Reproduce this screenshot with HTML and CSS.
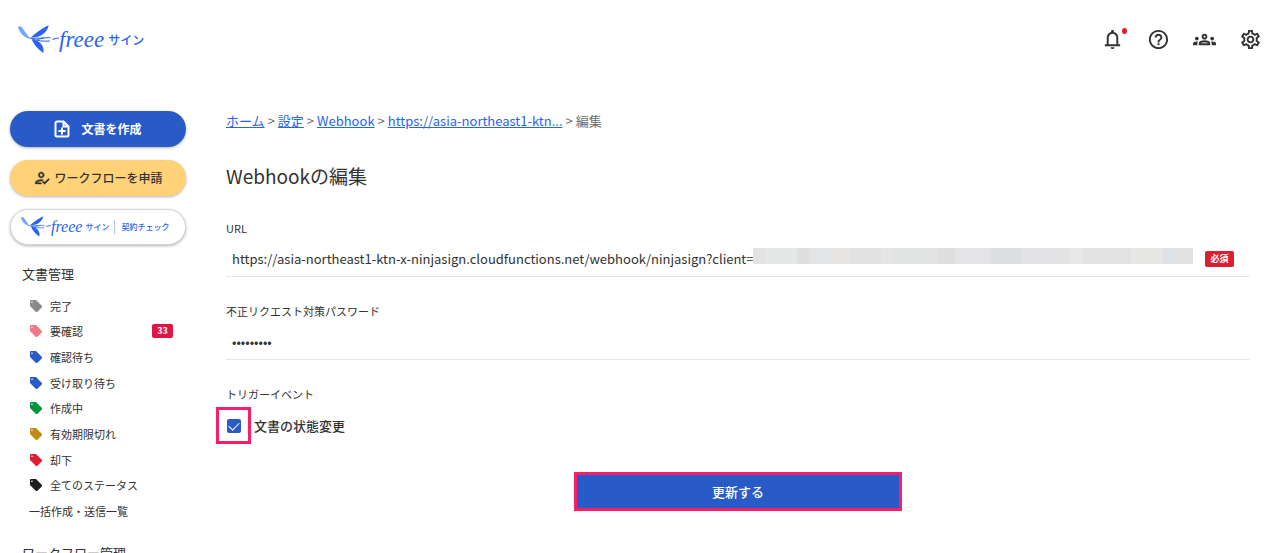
FILE: index.html
```html
<!DOCTYPE html>
<html lang="ja">
<head>
    <meta charset="UTF-8">
    <meta name="viewport" content="width=device-width, initial-scale=1.0">
    <title>Webhookの編集</title>
    <link rel="stylesheet" href="styles.css">
</head>
<body>
    <svg class="symbols" aria-hidden="true">
        <symbol id="swallow" viewBox="0 0 42 30">
            <path fill="#73a5ff" d="M1 2c1-1 3-1 4 .5l6.500 9-1.500 1.500-2.500-1.500C4 9 2 6 1 2z"/>
            <path fill="#2864f0" d="M13.500 12.700C19 8 24 3.500 31.700.3c-1 5-5 10-11.700 11.700zM14.500 14c2 5 6 10 11.800 14 1-5-1-9.500-6.600-12.500z"/>
            <path fill="none" stroke="#2864f0" stroke-width="1" d="M10.500 12.500l4 .9 19-.7M14.500 13.500c6 2.500 12 3 18.500 2.500M20 14.500l7-1.500"/>
            <path fill="none" stroke="#2864f0" stroke-width="1.200" d="M35.500 14.500c3-1.500 5-1.500 7.500-1.500"/>
        </symbol>
        <symbol id="tag" viewBox="0 0 12 12">
            <path fill="currentColor" fill-rule="evenodd" d="M0 1a1 1 0 0 1 1-1h5l6 6a1 1 0 0 1 0 1.200L7.200 12a1 1 0 0 1-1.200 0L0 6zM2 1.400a.8.8 0 1 0 0 1.600.8.8 0 0 0 0-1.600z"/>
        </symbol>
    </svg>

    <header class="header">
        <a class="logo" href="#">
            <svg class="logo-bird"><use href="#swallow"/></svg>
            <span class="logo-name">freee</span>
            <span class="logo-sub">サイン</span>
        </a>
        <nav class="header-nav">
            <button class="icon-button" type="button" aria-label="お知らせ">
                <svg viewBox="0 0 24 24"><path d="M4 19v-2h2v-7q0-2.075 1.250-3.688T10.500 4.200v-.7q0-.625.438-1.063T12 2t1.063.438T13.500 3.500v.7q2 .5 3.250 2.113T18 10v7h2v2zm8 3q-.825 0-1.413-.587T10 20h4q0 .825-.588 1.413T12 22m-4-5h8v-7q0-1.650-1.175-2.825T12 6 9.175 7.175 8 10z"/></svg>
                <span class="dot"></span>
            </button>
            <button class="icon-button" type="button" aria-label="ヘルプ">
                <svg viewBox="0 0 24 24"><path d="M11 18h2v-2h-2v2zm1-16C6.480 2 2 6.480 2 12s4.480 10 10 10 10-4.480 10-10S17.520 2 12 2zm0 18c-4.410 0-8-3.590-8-8s3.590-8 8-8 8 3.590 8 8-3.590 8-8 8zm0-14c-2.210 0-4 1.790-4 4h2c0-1.100.9-2 2-2s2 .9 2 2c0 2-3 1.750-3 5h2c0-2.250 3-2.500 3-5 0-2.210-1.790-4-4-4z"/></svg>
            </button>
            <button class="icon-button" type="button" aria-label="メンバー">
                <svg viewBox="0 0 24 24"><path d="M4 13c1.100 0 2-.9 2-2s-.9-2-2-2-2 .9-2 2 .9 2 2 2zm1.130 1.100c-.37-.06-.74-.1-1.130-.1-.99 0-1.930.21-2.780.58C.48 14.900 0 15.620 0 16.430V18h4.500v-1.610c0-.83.23-1.610.63-2.290zM20 13c1.100 0 2-.9 2-2s-.9-2-2-2-2 .9-2 2 .9 2 2 2zm4 3.430c0-.81-.48-1.530-1.220-1.850-.85-.37-1.790-.58-2.780-.58-.39 0-.76.04-1.130.1.4.68.63 1.460.63 2.290V18H24v-1.570zm-7.760-2.780c-1.170-.52-2.610-.9-4.240-.9s-3.070.39-4.240.9C6.680 14.130 6 15.210 6 16.390V18h12v-1.610c0-1.180-.68-2.260-1.760-2.740zM8.070 16c.09-.23.13-.39.91-.69.97-.38 1.990-.56 3.020-.56s2.050.18 3.020.56c.77.3.81.46.91.69H8.070zM12 8c.55 0 1 .45 1 1s-.45 1-1 1-1-.45-1-1 .45-1 1-1m0-2c-1.660 0-3 1.340-3 3s1.340 3 3 3 3-1.340 3-3-1.340-3-3-3z"/></svg>
            </button>
            <button class="icon-button" type="button" aria-label="設定">
                <svg viewBox="0 0 24 24"><path d="M19.430 12.980c.04-.32.07-.64.07-.98 0-.34-.03-.66-.07-.98l2.110-1.650c.19-.15.24-.42.12-.64l-2-3.460c-.09-.16-.26-.25-.44-.25-.06 0-.12.01-.17.03l-2.490 1c-.52-.4-1.080-.73-1.690-.98l-.38-2.650C14.460 2.180 14.250 2 14 2h-4c-.25 0-.46.18-.49.42l-.38 2.650c-.61.25-1.170.59-1.690.98l-2.490-1c-.06-.02-.12-.03-.18-.03-.17 0-.34.09-.43.25l-2 3.460c-.13.22-.07.49.12.64l2.110 1.650c-.04.32-.07.65-.07.98 0 .33.03.66.07.98l-2.110 1.650c-.19.15-.24.42-.12.64l2 3.460c.09.16.26.25.44.25.06 0 .12-.01.17-.03l2.490-1c.52.4 1.080.73 1.690.98l.38 2.650c.03.24.24.42.49.42h4c.25 0 .46-.18.49-.42l.38-2.650c.61-.25 1.170-.59 1.690-.98l2.490 1c.06.02.12.03.18.03.17 0 .34-.09.43-.25l2-3.460c.12-.22.07-.49-.12-.64l-2.110-1.650zm-1.980-1.710c.04.31.05.52.05.73 0 .21-.02.43-.05.73l-.14 1.130.89.7 1.080.84-.7 1.210-1.270-.51-1.040-.42-.9.68c-.43.32-.84.56-1.250.73l-1.060.43-.16 1.130-.2 1.350h-1.400l-.19-1.350-.16-1.130-1.060-.43c-.43-.18-.83-.41-1.230-.71l-.91-.7-1.060.43-1.270.51-.7-1.210 1.080-.84.89-.7-.14-1.130c-.03-.31-.05-.54-.05-.74s.02-.43.05-.73l.14-1.130-.89-.7-1.080-.84.7-1.210 1.270.51 1.040.42.9-.68c.43-.32.84-.56 1.250-.73l1.060-.43.16-1.130.2-1.350h1.390l.19 1.350.16 1.130 1.060.43c.43.18.83.41 1.230.71l.91.7 1.060-.43 1.270-.51.7 1.210-1.070.85-.89.7.14 1.130zM12 8c-2.210 0-4 1.790-4 4s1.790 4 4 4 4-1.790 4-4-1.790-4-4-4zm0 6c-1.100 0-2-.9-2-2s.9-2 2-2 2 .9 2 2-.9 2-2 2z"/></svg>
            </button>
        </nav>
    </header>

    <div class="container">
        <aside class="sidebar">
            <button class="side-button create" type="button">
                <svg width="16" height="18" viewBox="0 0 16 18" fill="none" stroke="currentColor" stroke-width="2"><path d="M9.500 1.500H3a1.500 1.500 0 0 0-1.500 1.500v12A1.500 1.500 0 0 0 3 16.500h10a1.500 1.500 0 0 0 1.500-1.500V6.500zM9.500 1.500v5h5M8 7.500v7M4.500 11h7"/></svg>
                文書を作成
            </button>
            <button class="side-button apply" type="button">
                <svg width="18" height="18" viewBox="0 0 24 24" fill="currentColor" stroke="currentColor" stroke-width=".5"><path d="M11 12c2.210 0 4-1.790 4-4s-1.790-4-4-4-4 1.790-4 4 1.790 4 4 4zm0-6c1.100 0 2 .9 2 2s-.9 2-2 2-2-.9-2-2 .9-2 2-2zm-1 12H5c0-.64 3.130-2 6-2 .33 0 .65.02.97.05l1.730-1.780c-.98-.18-1.930-.27-2.700-.27-2.670 0-8 1.340-8 4v2h9l-2-2zm10.600-5.500l-5.130 5.170-2.070-2.080L12 17l3.470 3.500L22 13.910z"/></svg>
                ワークフローを申請
            </button>
            <button class="side-button check" type="button">
                <svg class="check-bird"><use href="#swallow"/></svg>
                <span class="check-name">freee</span>
                <span class="check-sub">サイン</span>
                <span class="check-label">契約チェック</span>
            </button>

            <h2 class="side-title">文書管理</h2>
            <ul class="side-list">
                <li><a href="#"><svg class="tag gray"><use href="#tag"/></svg>完了</a></li>
                <li><a href="#"><svg class="tag pink"><use href="#tag"/></svg>要確認<span class="count">33</span></a></li>
                <li><a href="#"><svg class="tag blue"><use href="#tag"/></svg>確認待ち</a></li>
                <li><a href="#"><svg class="tag blue"><use href="#tag"/></svg>受け取り待ち</a></li>
                <li><a href="#"><svg class="tag green"><use href="#tag"/></svg>作成中</a></li>
                <li><a href="#"><svg class="tag gold"><use href="#tag"/></svg>有効期限切れ</a></li>
                <li><a href="#"><svg class="tag red"><use href="#tag"/></svg>却下</a></li>
                <li><a href="#"><svg class="tag black"><use href="#tag"/></svg>全てのステータス</a></li>
                <li><a href="#">一括作成・送信一覧</a></li>
            </ul>
            <h2 class="side-title">ワークフロー管理</h2>
        </aside>

        <main class="main">
            <nav class="breadcrumb">
                <a href="#">ホーム</a>
                <span>&gt;</span>
                <a href="#">設定</a>
                <span>&gt;</span>
                <a href="#">Webhook</a>
                <span>&gt;</span>
                <a href="#">https://asia-northeast1-ktn...</a>
                <span>&gt;</span>
                <span>編集</span>
            </nav>
            <h1 class="page-title">Webhookの編集</h1>

            <form>
                <div class="field">
                    <label for="url">URL</label>
                    <div class="field-row">
                        <input class="url-input" type="text" id="url" name="url" value="https://asia-northeast1-ktn-x-ninjasign.cloudfunctions.net/webhook/ninjasign?client=">
                        <span class="mask"></span>
                        <span class="required">必須</span>
                    </div>
                </div>
                <div class="field">
                    <label for="password">不正リクエスト対策パスワード</label>
                    <div class="field-row">
                        <input type="password" id="password" name="password" value="webhook12">
                    </div>
                </div>
                <fieldset class="events">
                    <legend>トリガーイベント</legend>
                    <div class="check-row">
                        <span class="highlight"><input type="checkbox" id="status" name="status" checked></span>
                        <label for="status">文書の状態変更</label>
                    </div>
                </fieldset>
                <button class="submit" type="submit">更新する</button>
            </form>
        </main>
    </div>
</body>
</html>
```
FILE: styles.css
```css
* {
    box-sizing: border-box;
}

body {
    margin: 0;
    height: 100vh;
    overflow: hidden;
    font-family: "Noto Sans CJK JP", sans-serif;
    font-size: 13px;
    line-height: 20px;
    color: #323232;
    background-color: #fff;
}

button,
input {
    font: inherit;
    color: inherit;
}

button {
    cursor: pointer;
}

.symbols {
    display: none;
}

.header {
    display: flex;
    justify-content: space-between;
    align-items: center;
    height: 79px;
    padding: 0 15px 0 17px;
}

.logo {
    display: flex;
    align-items: center;
    color: #2864f0;
    text-decoration: none;
}

.logo-bird {
    width: 42px;
    height: 30px;
}

.logo-name,
.check-name {
    font-family: "Liberation Serif", serif;
    font-style: italic;
}

.logo-name {
    font-size: 23px;
}

.logo-sub {
    margin-left: 4px;
    font-size: 12px;
    font-weight: 500;
}

.header-nav {
    display: flex;
    gap: 23px;
}

.icon-button {
    position: relative;
    display: flex;
    padding: 0;
    border: none;
    background: none;
}

.icon-button svg {
    width: 23px;
    height: 23px;
    fill: #323232;
}

.dot {
    position: absolute;
    top: 0;
    right: -3px;
    width: 5px;
    height: 6px;
    border-radius: 50%;
    background-color: #dc1e32;
}

.container {
    display: flex;
    gap: 40px;
    padding: 32px 27px 0 10px;
}

.sidebar {
    flex: none;
    width: 176px;
}

.side-button {
    display: flex;
    align-items: center;
    justify-content: center;
    width: 100%;
    height: 36px;
    margin-bottom: 13px;
    padding: 0;
    border: none;
    border-radius: 18px;
    font-size: 12px;
    font-weight: 500;
    box-shadow: 0 1px 3px rgba(0, 0, 0, 0.3);
}

.create {
    gap: 11px;
    color: #fff;
    font-weight: 700;
    background-color: #285ac8;
}

.apply {
    gap: 3px;
    background-color: #ffd278;
}

.check {
    justify-content: flex-start;
    padding-left: 9px;
    border: 1px solid #d7d7d7;
    color: #2864f0;
    font-size: 8px;
    background-color: #fff;
}

.check-bird {
    width: 31px;
    height: 22px;
}

.check-name {
    font-size: 16px;
    font-weight: 400;
}

.check-sub {
    margin: 0 5px 0 3px;
}

.check-label {
    padding-left: 6px;
    border-left: 1px solid #aac8ff;
    line-height: 14px;
}

.side-title {
    margin: 19px 0 9px 12px;
    font-size: 13px;
    font-weight: 400;
}

.side-list {
    display: grid;
    grid-auto-rows: 1fr;
    height: 231px;
    margin: 0 0 17px;
    padding: 0 13px 0 19px;
    list-style: none;
    font-size: 11px;
}

.side-list a {
    display: flex;
    align-items: center;
    height: 100%;
    color: inherit;
    text-decoration: none;
}

.tag {
    width: 12px;
    height: 12px;
    margin: 0 8px 0 1px;
}

.gray {
    color: #8c8989;
}

.pink {
    color: #f07882;
}

.blue {
    color: #285ac8;
}

.green {
    color: #00963c;
}

.gold {
    color: #be8c14;
}

.red {
    color: #dc1e32;
}

.black {
    color: #1e1e1e;
}

.count,
.required {
    border-radius: 2px;
    color: #fff;
    font-size: 9px;
    font-weight: 700;
    text-align: center;
}

.count {
    width: 21px;
    margin-left: auto;
    line-height: 14px;
    background-color: #e11446;
}

.main {
    flex: 1;
    min-width: 0;
}

.breadcrumb {
    display: flex;
    gap: 3px;
    color: #6e6b6b;
}

.breadcrumb a {
    color: #2864f0;
}

.page-title {
    margin: 30px 0 27px;
    font-size: 19px;
    font-weight: 400;
    line-height: 30px;
}

.field {
    margin-bottom: 24px;
    border-bottom: 1px solid #e6e6e6;
}

.field label,
.events legend {
    display: block;
    padding: 0;
    font-size: 11px;
}

.field-row {
    display: flex;
    align-items: center;
    height: 38px;
    padding: 3px 16px 0 6px;
}

.field-row input {
    padding: 0;
    border: none;
    outline: none;
    background: none;
}

.url-input {
    flex: none;
    width: 521px;
}

.mask {
    flex: 1;
    height: 16px;
    margin: -6px 12px 0 0;
    background: linear-gradient(90deg, #e4e3e4 3%, #e6e8e7 3% 10%, #dfdfe0 10% 13%, #e3e4e7 13% 18%, #e6e5e3 18% 22%, #e2e2e2 22% 29%, #e6e5e3 29% 32%, #e2e4e3 32% 42%, #dfdfe0 42% 46%, #e4e3e5 46% 54%, #dedfe1 54% 61%, #e3e3e6 61% 72%, #e8e8e6 72% 75%, #e3e3e3 75% 86%, #e7e7e6 86% 93%, #dfe2e5 93% 96%, #e2e2e2 96%);
}

.required {
    flex: none;
    width: 29px;
    line-height: 16px;
    background-color: #dc1e32;
}

.events {
    margin: 0;
    padding: 0;
    border: none;
}

.check-row {
    display: flex;
    align-items: center;
    gap: 3px;
    margin: 3px 0 28px -10px;
    font-weight: 500;
}

.highlight {
    display: flex;
    align-items: center;
    justify-content: center;
    width: 35px;
    height: 37px;
    border: 3px solid #fa1e69;
}

.highlight input {
    appearance: none;
    display: flex;
    justify-content: center;
    width: 14px;
    height: 14px;
    margin: 0;
    border-radius: 2px;
    background-color: #285ac8;
}

.highlight input:checked::before {
    content: "";
    width: 9px;
    height: 5px;
    margin-top: 3px;
    border: solid #fff;
    border-width: 0 0 1px 1px;
    transform: rotate(-45deg);
}

.submit {
    display: block;
    width: 32%;
    height: 39px;
    margin: 0 auto;
    padding: 0;
    border: 3px solid #fa1e69;
    color: #fff;
    font-weight: 500;
    background-color: #285ac8;
}
```
